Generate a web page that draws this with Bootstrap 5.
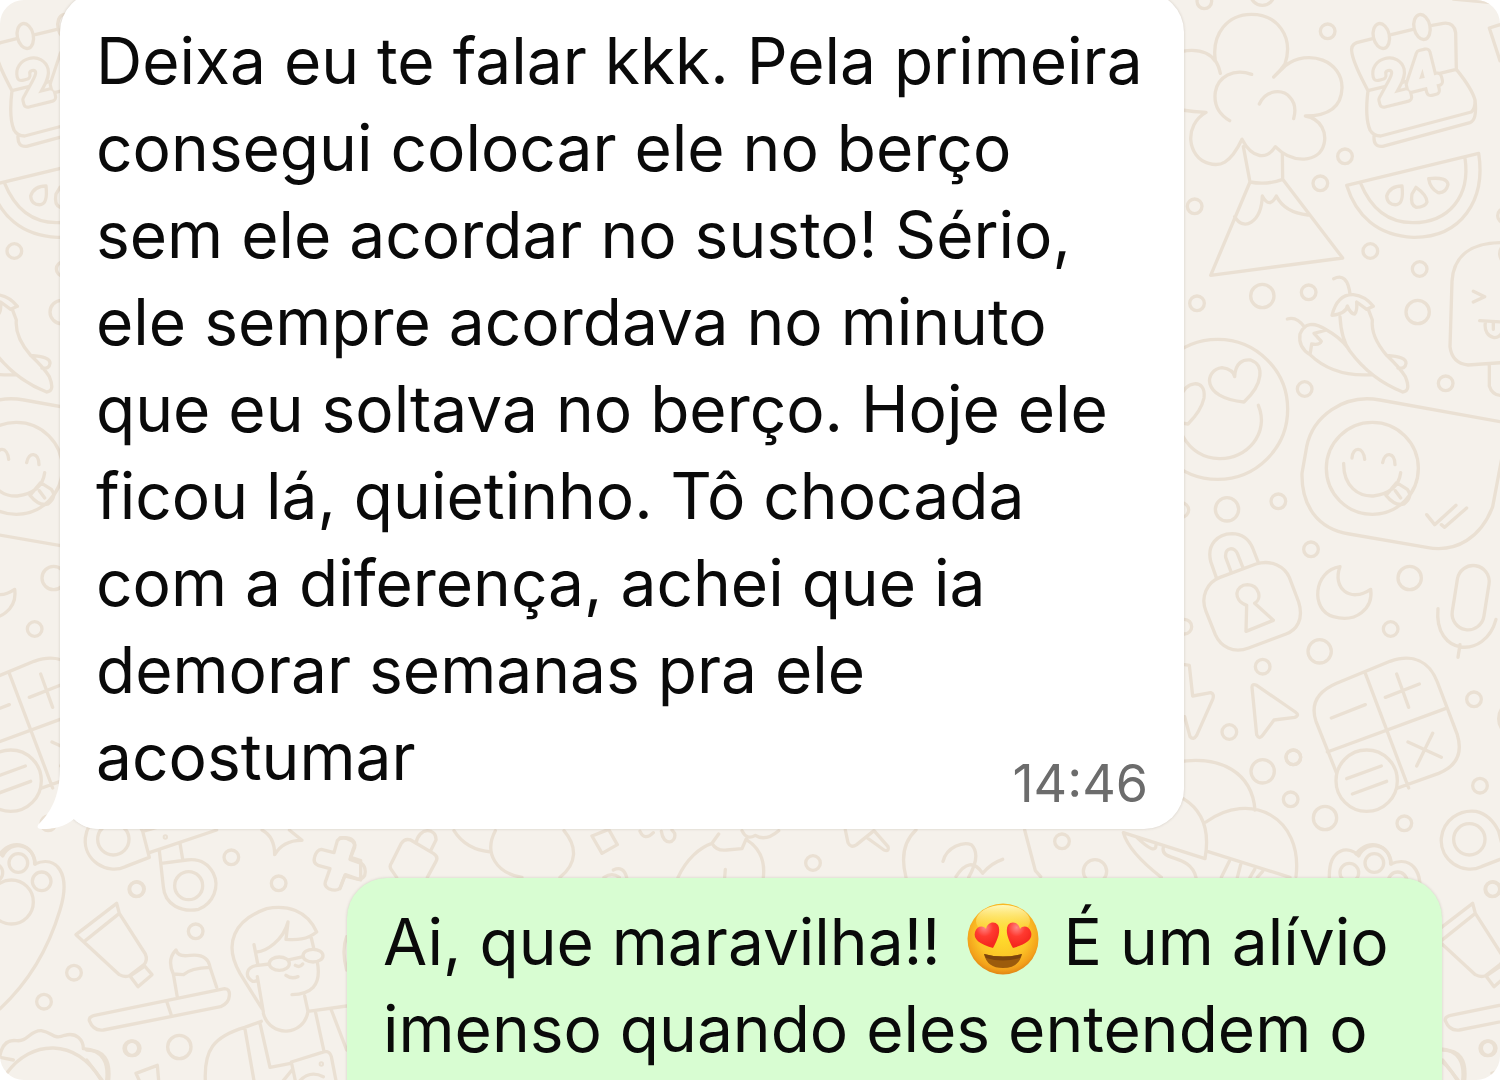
<!DOCTYPE html>
<html lang="pt-BR">
<head>
<meta charset="utf-8">
<meta name="viewport" content="width=device-width, initial-scale=1">
<title>Conversa</title>
<link href="https://cdn.jsdelivr.net/npm/bootstrap@5.3.0/dist/css/bootstrap.min.css" rel="stylesheet">
<style>
  body { background: #fff; font-family: Inter, "Liberation Sans", sans-serif; }
  .chat { height: 100vh; background: #f5f1eb; border-radius: 24px; padding: 0 58px 0 60px; }
  .wallpaper { position: absolute; top: 0; left: 0; width: 1500px; height: 1080px; z-index: 0; }
  .bubble { position: relative; z-index: 1; border-radius: 40px; color: #0a0a0a; font-size: 64px; line-height: 87px; box-shadow: 0 0 3px rgba(80, 60, 40, .2); white-space: nowrap; }
  .bubble-in { width: 82%; max-width: 1124px; margin-top: -8px; padding: 25px 36px 21px; background: #fff; }
  .bubble-out { width: 80%; max-width: 1095px; margin-top: 49px; padding: 20px 36px 64px; background: #d8fdd2; }
  .bubble-in > p, .bubble-in > time { grid-area: 1 / 1; }
  .stamp { font-size: 52px; line-height: 48px; color: #6c6c6c; }
  .tail { position: absolute; left: -24px; bottom: 0; width: 64px; height: 64px; }
  .emoji { width: 72px; height: 72px; vertical-align: -10px; margin: 0 6px 0 9px; }
  .day-number { font: 400 158px Inter, "Liberation Sans", sans-serif; }
</style>
</head>
<body>
<main class="chat position-relative overflow-hidden d-flex flex-column">
  <svg class="wallpaper" viewBox="0 0 1500 1080" fill="none" stroke="#eae0d3" stroke-width="10" stroke-linecap="round" stroke-linejoin="round" aria-hidden="true">
    <g id="doodles">
      <g transform="translate(1180 0) scale(.33333)">
        <!-- volcano -->
        <path d="M121 220Q116 196 106 182C94 100 144 43 214 43C292 43 342 110 315 192Q302 212 281 231M281 231L315 198C386 143 488 184 486 264C484 326 440 348 376 348C426 357 440 400 432 432C418 490 336 492 286 440C262 478 218 480 186 418C150 494 118 500 86 490C22 472 10 376 78 337Q40 336 6 330M6 154Q78 142 106 184M215 223C160 204 114 230 106 276C100 320 122 346 149 362M238 312C258 268 308 266 330 292Q352 316 341 356M190 440L210 546Q260 556 308 538L307 460M210 546L92 826L488 774L308 538M164 650C190 696 244 668 247 588Q268 628 289 588Q314 638 384 645"/>
        <!-- calendar -->
        <path d="M578 116L530 128Q510 136 516 160Q522 194 564 272Q554 352 570 390Q580 408 602 408L874 336Q886 326 885 300Q876 266 829 208L827 98Q822 66 790 70L756 76M634 104L699 88M582 408Q580 442 608 439L870 368Q892 360 885 300M564 272L829 208"/>
        <ellipse cx="604" cy="108" rx="24" ry="38" transform="rotate(-12 604 108)"/><ellipse cx="726" cy="81" rx="24" ry="38" transform="rotate(-12 726 81)"/>
        <g class="day-number" transform="translate(600 312) rotate(-14)">
          <text stroke="#eae0d3" stroke-width="34">24</text>
          <text stroke="#f5f1eb" stroke-width="15" fill="#f5f1eb">24</text>
        </g>
        <!-- melon -->
        <path d="M500 556L896 460C918 600 844 714 700 712C594 708 528 648 500 556ZM541 548C570 620 620 668 698 668C806 668 872 590 855 474"/>
        <path d="M666 558Q672 610 650 614Q622 616 620 588Q630 558 666 558ZM708 562Q740 584 741 606Q736 622 708 622Q690 614 696 582ZM746 536Q802 530 804 554Q798 580 774 578Q750 564 746 536Z"/>
        <circle cx="73" cy="4" r="22"/><circle cx="247" cy="-20" r="36"/><circle cx="443" cy="94" r="22"/><circle cx="495" cy="469" r="22"/><circle cx="421" cy="550" r="22"/><circle cx="44" cy="619" r="22"/><circle cx="571" cy="753" r="22"/><circle cx="719" cy="807" r="22"/>
        <circle cx="975" cy="647" r="22"/><path d="M960 74L928 84L960 182M820 -3L960 10"/>
      </g>
      <g transform="translate(1180 240) scale(.33333)">
        <!-- heart eyes face -->
        <circle cx="113" cy="508" r="210"/>
        <path d="M192 486C60 474 74 388 126 383Q160 388 164 410C166 366 190 358 212 360C252 374 252 430 192 486ZM24 552C-100 540 -80 450 -34 446Q4 450 4 470C10 426 80 410 72 474Q64 512 24 552ZM235 496C270 580 200 658 118 656Q46 654 8 588"/>
        <!-- chillies -->
        <path d="M461 116Q502 96 510 162M456 226Q472 162 520 164Q556 168 580 199L560 208L530 186Q532 214 524 222Q512 222 502 198Q500 220 456 226ZM480 230Q484 300 510 334Q572 418 668 456Q694 454 676 410Q660 384 620 346Q572 290 577 240L565 208M620 346Q680 350 678 370Q676 388 654 384M322 237Q350 228 374 262M440 270Q380 232 360 282Q354 322 390 344L395 312Q420 316 424 304L402 280ZM440 270Q480 292 504 324M390 344Q460 412 576 404"/>
        <!-- ice lolly -->
        <path d="M980 8C870 4 820 50 816 124L810 320Q816 370 864 375L990 366M928 375L928 438Q936 464 960 466M880 154L914 170L880 186M899 242L970 246M916 248C908 300 970 310 968 260M940 250V268M968 18Q950 40 968 66"/>
        <!-- sticker with face -->
        <path d="M960 545L600 480C490 460 398 530 380 620L366 700C364 794 410 866 508 882L740 922C830 940 904 890 938 800L970 630"/>
        <circle cx="577" cy="685" r="138"/><path d="M516 654C518 620 550 618 554 658M608 668C614 634 644 636 645 674M491 670C490 740 536 770 580 768Q654 758 662 698M618 766L650 728L682 748Q700 770 672 792Q646 800 618 766M646 752L662 774M740 824L764 854L828 796M784 854L794 862L860 804"/>
        <circle cx="51" cy="190" r="22"/><circle cx="247" cy="168" r="35"/><circle cx="386" cy="157" r="22"/><circle cx="713" cy="216" r="35"/><circle cx="374" cy="447" r="22"/><circle cx="797" cy="430" r="22"/><circle cx="141" cy="808" r="35"/><circle cx="295" cy="784" r="22"/><circle cx="4" cy="810" r="22"/>
      </g>
      <g transform="translate(1180 500) scale(.33333)">
        <!-- padlock -->
        <path d="M110 236L92 184C80 134 112 102 156 101Q200 102 218 144L236 190M154 218L137 172C134 140 164 140 172 160L190 206M120 232L228 192C276 178 314 200 328 232L356 306C372 358 350 390 318 402L206 444C160 462 122 440 106 404L78 334C60 290 82 246 120 232Z"/>
        <path d="M200 316C156 300 166 254 202 254C240 256 246 298 224 310L280 361L198 394Z"/>
        <!-- moon -->
        <path d="M480 200C400 212 390 330 460 350C530 370 580 324 572 268C510 310 456 264 480 200Z"/>
        <!-- microphone -->
        <rect x="824" y="196" width="96" height="194" rx="48" transform="rotate(9 872 293)"/><path d="M774 326C760 468 916 480 948 358M840 434L834 472"/>
        <!-- bolt and arrow -->
        <path d="M14 494L28 496L38 588L92 578Q104 582 98 598L50 706Q40 722 30 710L14 650M216 562L230 704Q238 720 248 706L282 660L344 652Q360 646 346 636L230 556Q216 550 216 562Z"/>
        <!-- calculator -->
        <path d="M470 550L630 484C700 460 748 484 772 546L832 704C850 764 826 800 776 820L620 876C540 900 500 880 474 830L408 664C390 610 414 574 470 550ZM556 520L686 864M442 756L796 626M454 654L556 614M650 522L686 622M616 592L718 552M684 726L784 772M758 700L710 798"/>
        <circle cx="560" cy="842" r="92" fill="#f5f1eb"/><path d="M500 836L604 798M517 882L620 844"/>
        <circle cx="393" cy="148" r="22"/><circle cx="689" cy="234" r="35"/><circle cx="632" cy="387" r="22"/><circle cx="13" cy="380" r="22"/><circle cx="419" cy="454" r="35"/><circle cx="248" cy="500" r="22"/><circle cx="148" cy="696" r="22"/><circle cx="882" cy="598" r="22"/><circle cx="340" cy="772" r="22"/><circle cx="248" cy="814" r="35"/><circle cx="1010" cy="656" r="54"/>
      </g>
      <g transform="translate(1120 740) scale(.33333)">
        <!-- fruit and leaf -->
        <path d="M170 66C306 44 396 100 405 210M190 176Q278 230 255 356L10 278Q26 336 124 412M48 290Q110 350 108 312M130 322C120 366 210 340 228 412M258 246C390 150 550 230 528 410M262 334L510 412M328 364L304 412M362 374L352 412M404 388L390 412M428 394L412 412"/>
        <circle cx="520" cy="52" r="22"/><circle cx="512" cy="178" r="22"/><circle cx="615" cy="234" r="35"/><circle cx="853" cy="250" r="22"/><circle cx="1080" cy="137" r="22"/><circle cx="1119" cy="447" r="22"/><circle cx="1106" cy="925" r="22"/>
        <path d="M628 412C626 320 690 316 716 348C740 298 810 310 814 372M968 930C1020 930 1040 960 1034 1020M968 960L1014 1020"/><circle cx="688" cy="398" r="28"/>
      </g>
      <g transform="translate(0 810) scale(.33333)">
        <!-- paw -->
        <path d="M0 132C40 80 104 106 104 162C170 134 214 190 180 300Q126 480 0 596"/><circle cx="55" cy="159" r="28"/><circle cx="125" cy="214" r="28"/><circle cx="34" cy="276" r="66"/>
        <!-- rings -->
        <path d="M376 170C320 196 250 150 256 84C262 30 310 -2 360 4Q404 14 428 64L448 142ZM448 128L650 60M428 64L470 52M478 122L490 230C494 286 546 308 596 298C640 280 660 230 640 190C620 152 590 146 560 150L484 160M540 100L548 148"/><circle cx="340" cy="88" r="47"/><circle cx="566" cy="227" r="42"/><circle cx="496" cy="81" r="3"/>
        <!-- star and plaster -->
        <path d="M786 60Q824 80 824 134Q850 90 906 91L868 60M1012 92Q1026 76 1050 90Q1068 98 1064 112L1052 142L1082 152L1082 210L1034 198L1020 234Q1010 246 986 236Q972 228 976 216L990 176L954 166Q938 158 944 140Q950 120 964 118L1002 128Z"/>
        <!-- tube -->
        <path d="M228 374L350 280L358 310L436 432Q444 450 432 464L390 496Q376 504 358 494L228 374M256 392L358 310M390 498L434 468L456 494L414 530Z"/>
        <!-- toothbrush -->
        <path d="M284 616L674 536Q690 536 688 558Q686 580 662 590L310 660Q280 664 268 632Q266 620 284 616ZM500 574L514 616M532 562L520 492Q500 448 528 420Q534 442 570 436Q624 430 630 472L650 532M520 492L550 494Q572 474 630 472"/>
        <!-- person with glasses -->
        <path d="M790 606L772 500Q776 516 758 514C734 500 736 470 774 466L762 404M786 596L720 490C668 400 704 330 800 296C860 284 920 300 950 366C920 390 890 390 858 388L864 336C850 390 800 424 770 426M774 466L808 462M866 450L910 440M934 384L942 418M952 456C966 530 930 552 876 554M886 466Q900 474 908 462M858 496Q874 508 894 500M914 558L924 604C912 680 810 684 790 610M784 634L734 652C640 680 612 720 616 812M734 652L762 812M780 640L810 772L872 760M924 604L1040 588M946 604L972 724M994 600L1040 720M886 812L874 756L976 724Q990 724 994 740L1008 812M850 812L876 780M900 812Q930 780 970 800"/>
        <ellipse cx="838" cy="461" rx="30" ry="20"/><ellipse cx="939" cy="437" rx="30" ry="19"/><circle cx="964" cy="762" r="3"/><path d="M1040 380Q1024 420 1040 480"/>
        <!-- food -->
        <path d="M0 736Q10 686 50 692C84 696 90 660 124 662C160 668 160 690 194 676C230 666 250 690 250 716C310 720 326 760 320 812M20 790C90 690 230 680 304 812M0 742L40 750M418 812L408 790L472 766L476 812"/>
        <circle cx="694" cy="142" r="22"/><circle cx="409" cy="238" r="22"/><circle cx="836" cy="220" r="22"/><circle cx="587" cy="364" r="22"/><circle cx="222" cy="488" r="22"/><circle cx="132" cy="575" r="22"/><circle cx="394" cy="715" r="22"/><circle cx="538" cy="711" r="35"/>
      </g>
      <g transform="translate(340 790) scale(.33333)">
        <path d="M0 144C40 140 50 156 40 176L30 208L64 220Q80 232 74 256Q66 270 50 266L16 254L0 296M212 150L280 190Q296 200 288 214L262 262M170 262L156 242Q146 230 154 220L184 160Q194 144 212 150M228 160C236 110 290 112 288 150L272 182M342 122Q378 180 454 186M466 122C430 190 470 250 546 262M672 122C712 170 712 220 660 262M756 138L806 118L832 164L786 190ZM792 262Q816 246 838 262M820 240Q850 226 860 262M900 124Q914 154 940 128M964 124C970 170 1010 160 1004 130L996 120M1014 262C1040 206 1080 172 1116 160L1136 132M1116 160Q1130 184 1160 180L1206 176L1218 148M1218 148C1260 174 1276 210 1270 262M1156 238L1154 262M1206 122Q1220 152 1246 136Q1276 156 1316 122"/>
      </g>
      <g transform="translate(780 780) scale(.33333)">
        <path d="M196 150L204 188Q212 206 230 194L282 152L324 200Q328 216 312 210L262 174M408 150Q354 200 378 292M489 244C500 200 550 184 574 194C596 216 590 250 566 292M528 290Q570 224 608 280Q632 250 668 238M734 150L766 272L782 290"/>
        <circle cx="99" cy="249" r="22"/><circle cx="846" cy="184" r="22"/><circle cx="945" cy="274" r="35"/>
      </g>
    </g>
    <use href="#doodles" x="-1356"/>
    <use href="#doodles" x="1356"/>
  </svg>

  <article class="bubble bubble-in d-grid flex-shrink-0">
    <svg class="tail" viewBox="0 0 64 64" fill="#fff" aria-hidden="true"><path d="M24 0C24 28 18 44 2 60Q0 64 6 64C18 64 28 62 38 54C44 60 52 64 64 64V0Z"/></svg>
    <p class="position-relative mb-0 pb-2">Deixa eu te falar kkk. Pela primeira<br>consegui colocar ele no berço<br>sem ele acordar no susto! Sério,<br>ele sempre acordava no minuto<br>que eu soltava no berço. Hoje ele<br>ficou lá, quietinho. Tô chocada<br>com a diferença, achei que ia<br>demorar semanas pra ele<br>acostumar</p>
    <time class="stamp align-self-end ms-auto" datetime="14:46">14:46</time>
  </article>

  <article class="bubble bubble-out align-self-end flex-shrink-0">
    <p class="mb-0">Ai, que maravilha!! <svg class="emoji" viewBox="0 0 72 72" role="img" aria-label="Rosto sorridente com olhos de coração">
      <defs>
        <radialGradient id="skin" cx=".5" cy=".42" r=".6"><stop offset="0" stop-color="#ffe02e"/><stop offset=".6" stop-color="#fcc427"/><stop offset=".85" stop-color="#f3a11b"/><stop offset="1" stop-color="#dc7d12"/></radialGradient>
        <linearGradient id="shine" x2="0" y2="1"><stop offset="0" stop-color="#fffbc0" stop-opacity=".95"/><stop offset="1" stop-color="#ffe640" stop-opacity="0"/></linearGradient>
        <radialGradient id="love" cx=".4" cy=".2" r=".7"><stop offset="0" stop-color="#ff8585"/><stop offset=".5" stop-color="#ff3a30"/><stop offset="1" stop-color="#f5281f"/></radialGradient>
      </defs>
      <circle cx="36" cy="36" r="35.500" fill="url(#skin)"/><ellipse cx="36" cy="18" rx="27" ry="16" fill="url(#shine)"/>
      <path d="M26 45C12 41 6 36 8 29C10 23 16 22 19 26C20 20 27 17 31 22C34 28 31 36 26 45Z" fill="url(#love)"/>
      <path d="M46 45C60 41 66 36 64 29C62 23 56 22 53 26C52 20 45 17 41 22C38 28 41 36 46 45Z" fill="url(#love)"/>
      <path d="M17 51Q36 56 55 51Q52 65 36 65Q20 65 17 51Z" fill="#9c5b0c"/><path d="M17 51Q36 56 55 51L53 55Q36 60 19 55Z" fill="#7c440d"/>
    </svg> É um alívio<br>imenso quando eles entendem o</p>
  </article>
</main>
<script src="https://cdn.jsdelivr.net/npm/bootstrap@5.3.0/dist/js/bootstrap.bundle.min.js"></script>
</body>
</html>
